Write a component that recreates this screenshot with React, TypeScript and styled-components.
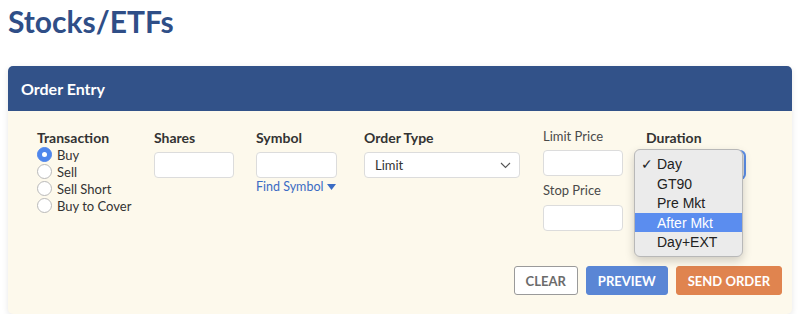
import React from 'react'
import styled, { createGlobalStyle } from 'styled-components'

const GlobalStyle = createGlobalStyle`
  body {
    margin: 0;
    background: #ffffff;
    font-family: Lato, 'Open Sans', sans-serif;
  }
`

const Page = styled.div`
  padding: 0 8px;
`

const Title = styled.h1`
  margin: 3px 0 0;
  font-size: 30px;
  line-height: 36px;
  font-weight: 700;
  color: #2f4e87;
`

const Card = styled.section`
  margin-top: 27px;
  border-radius: 5px;
  background: #fdf9ec;
  box-shadow: 0 2px 6px rgba(0, 0, 0, 0.1);
`

const CardHeader = styled.div`
  height: 45px;
  display: flex;
  align-items: center;
  padding: 0 13px;
  background: #325289;
  border-radius: 5px 5px 0 0;
  color: #ffffff;
  font-size: 16px;
  font-weight: 700;
`

const CardBody = styled.div`
  padding: 18px 10px 19px 29px;
`

const FormRow = styled.div`
  display: flex;
  align-items: flex-start;
`

const Column = styled.div<{ $width: number }>`
  position: relative;
  width: ${(p) => p.$width}px;
  flex: none;
  display: flex;
  flex-direction: column;
`

const Label = styled.div<{ $light?: boolean }>`
  font-size: ${(p) => (p.$light ? 13 : 14)}px;
  font-weight: ${(p) => (p.$light ? 400 : 700)};
  line-height: 18px;
  color: ${(p) => (p.$light ? '#4a4a4a' : '#333333')};
  margin-top: ${(p) => (p.$light ? -2 : 0)}px;
  margin-bottom: 5px;
`

const RadioList = styled.div`
  display: flex;
  flex-direction: column;
  margin-top: -6px;
`

const RadioRow = styled.label`
  display: flex;
  align-items: center;
  gap: 5px;
  height: 17px;
  font-size: 13px;
  color: #333333;
`

const RadioDot = styled.span<{ $checked?: boolean }>`
  box-sizing: border-box;
  width: 15px;
  height: 15px;
  border-radius: 50%;
  flex: none;
  display: flex;
  align-items: center;
  justify-content: center;
  background: ${(p) => (p.$checked ? '#4f86ec' : '#ffffff')};
  border: 1px solid ${(p) => (p.$checked ? '#4f86ec' : '#b9b9b9')};
  &::after {
    content: '';
    display: ${(p) => (p.$checked ? 'block' : 'none')};
    width: 5px;
    height: 5px;
    border-radius: 50%;
    background: #ffffff;
  }
`

const TextBox = styled.div<{ $width: number }>`
  box-sizing: border-box;
  width: ${(p) => p.$width}px;
  height: 26px;
  background: #ffffff;
  border: 1px solid #dcdcdc;
  border-radius: 4px;
`

const SelectBox = styled.div<{ $width: number; $focused?: boolean }>`
  box-sizing: border-box;
  width: ${(p) => p.$width}px;
  height: 26px;
  display: flex;
  align-items: center;
  justify-content: space-between;
  padding: 0 8px 0 10px;
  background: #ffffff;
  border: 1px solid #dcdcdc;
  border-radius: 4px;
  font-size: 13px;
  color: #333333;
  box-shadow: ${(p) => (p.$focused ? '0 0 0 2px #5b8de6' : 'none')};
`

const FindLink = styled.a`
  margin-top: 1px;
  display: flex;
  align-items: center;
  gap: 4px;
  font-size: 12.5px;
  line-height: 16px;
  color: #3b6cc4;
  text-decoration: none;
`

const StopLabel = styled(Label)`
  margin-top: 5px;
  margin-bottom: 6px;
`

const Popup = styled.ul`
  position: absolute;
  left: -12px;
  top: 20px;
  width: 109px;
  box-sizing: border-box;
  margin: 0;
  padding: 4px 0;
  list-style: none;
  background: #ebebeb;
  border: 1px solid #b8b8b8;
  border-radius: 6px;
  box-shadow: 0 4px 10px rgba(0, 0, 0, 0.18);
  font-family: 'Liberation Sans', Arial, sans-serif;
  font-size: 14px;
  color: #222222;
`

const PopupItem = styled.li<{ $active?: boolean }>`
  position: relative;
  height: 19.5px;
  line-height: 20px;
  padding-left: 22px;
  background: ${(p) => (p.$active ? '#5b8def' : 'transparent')};
  color: ${(p) => (p.$active ? '#ffffff' : '#222222')};
`

const Check = styled.span`
  position: absolute;
  left: 6px;
  top: 0;
`

const Actions = styled.div`
  display: flex;
  justify-content: flex-end;
  gap: 8px;
  margin-top: 35px;
`

const Button = styled.button<{ $variant: 'clear' | 'preview' | 'send' }>`
  height: 29px;
  padding: 0 11px;
  border-radius: 3px;
  font-family: Lato, sans-serif;
  font-size: 13px;
  font-weight: 700;
  letter-spacing: 0;
  cursor: pointer;
  color: ${(p) => (p.$variant === 'clear' ? '#6b6b6b' : '#ffffff')};
  background: ${(p) =>
    p.$variant === 'clear' ? '#ffffff' : p.$variant === 'preview' ? '#5a86d5' : '#e0844f'};
  border: 1px solid
    ${(p) =>
      p.$variant === 'clear' ? '#9a9a9a' : p.$variant === 'preview' ? '#5a86d5' : '#e0844f'};
`

const Chevron = () => (
  <svg width="11" height="7" viewBox="0 0 11 7" fill="none">
    <path d="M1 1l4.5 4.5L10 1" stroke="#555" strokeWidth="1.1" />
  </svg>
)

const Caret = () => (
  <svg width="9" height="6" viewBox="0 0 9 6">
    <path d="M0 0h9L4.5 6z" fill="#3b6cc4" />
  </svg>
)

const transactions = ['Buy', 'Sell', 'Sell Short', 'Buy to Cover']
const durations = ['Day', 'GT90', 'Pre Mkt', 'After Mkt', 'Day+EXT']

export default function App() {
  return (
    <>
      <GlobalStyle />
      <Page>
        <Title>Stocks/ETFs</Title>
        <Card>
          <CardHeader>Order Entry</CardHeader>
          <CardBody>
            <FormRow>
              <Column $width={117}>
                <Label>Transaction</Label>
                <RadioList>
                  {transactions.map((t, i) => (
                    <RadioRow key={t}>
                      <RadioDot $checked={i === 0} />
                      {t}
                    </RadioRow>
                  ))}
                </RadioList>
              </Column>
              <Column $width={102}>
                <Label>Shares</Label>
                <TextBox $width={80} />
              </Column>
              <Column $width={108}>
                <Label>Symbol</Label>
                <TextBox $width={81} />
                <FindLink href="#">
                  Find Symbol <Caret />
                </FindLink>
              </Column>
              <Column $width={179}>
                <Label>Order Type</Label>
                <SelectBox $width={156}>
                  Limit
                  <Chevron />
                </SelectBox>
              </Column>
              <Column $width={103}>
                <Label $light>Limit Price</Label>
                <TextBox $width={80} />
                <StopLabel $light>Stop Price</StopLabel>
                <TextBox $width={80} />
              </Column>
              <Column $width={98}>
                <Label>Duration</Label>
                <SelectBox $width={98} $focused />
                <Popup>
                  {durations.map((d) => (
                    <PopupItem key={d} $active={d === 'After Mkt'}>
                      {d === 'Day' && <Check>✓</Check>}
                      {d}
                    </PopupItem>
                  ))}
                </Popup>
              </Column>
            </FormRow>
            <Actions>
              <Button $variant="clear">CLEAR</Button>
              <Button $variant="preview">PREVIEW</Button>
              <Button $variant="send">SEND ORDER</Button>
            </Actions>
          </CardBody>
        </Card>
      </Page>
    </>
  )
}
